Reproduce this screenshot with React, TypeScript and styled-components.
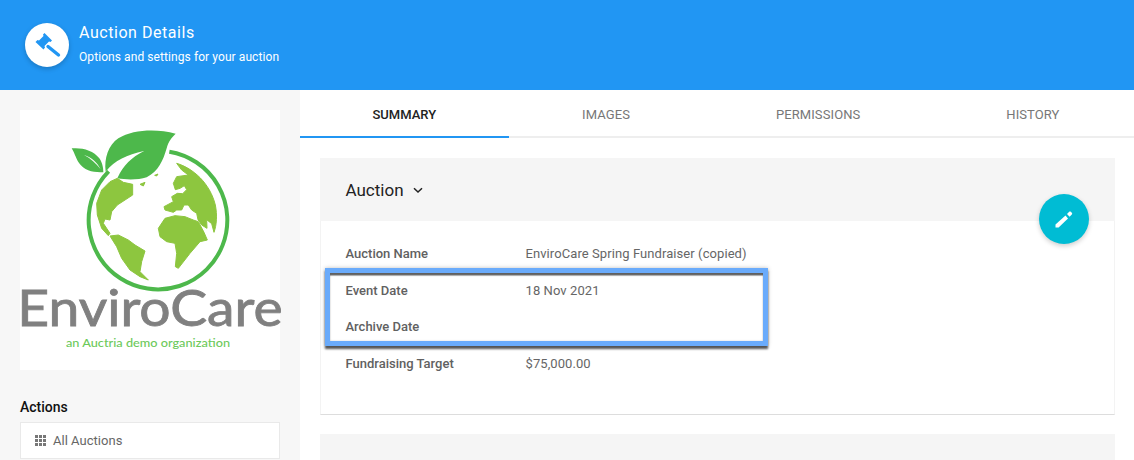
import React from "react";
import styled, { createGlobalStyle } from "styled-components";

const Global = createGlobalStyle`
  html, body { margin: 0; padding: 0; background: #fff; overflow: hidden; }
  body { font-family: Roboto, "Liberation Sans", sans-serif; }
  * { box-sizing: border-box; }
`;
const Page = styled.div`width: 1134px; height: 460px; overflow: hidden; display: flex; flex-direction: column;`;
const Header = styled.header`
  height: 90px; flex: none; background: #2196f3; display: flex; align-items: flex-start; gap: 10px;
  padding: 23px 0 0 25px; color: #fff;
`;
const Badge = styled.div`
  width: 44px; height: 44px; border-radius: 50%; background: #fff; display: flex; align-items: center;
  justify-content: center; box-shadow: 0 2px 5px rgba(0,0,0,.2);
`;
const HeaderText = styled.div`display: flex; flex-direction: column;`;
const Title = styled.div`font-size: 16px; line-height: 19px; margin-bottom: 8px; letter-spacing: .55px;`;
const Subtitle = styled.div`font-size: 12px; line-height: 14px; letter-spacing: .08px;`;
const Body = styled.div`flex: 1; display: flex; min-height: 0;`;
const Sidebar = styled.aside`width: 300px; flex: none; background: #f7f7f7; padding: 20px;`;
const LogoCard = styled.div`width: 260px; height: 260px; background: #fff; display: block;`;
const LogoArt = styled.svg`display: block; overflow: visible;`;
const ActionsTitle = styled.div`font-size: 14px; line-height: 16px; font-weight: 500; color: #111; margin-top: 29px; margin-bottom: 7px;`;
const ActionItem = styled.div`
  height: 37px; background: #fff; border: 1px solid #e9e9e9; display: flex; align-items: center; gap: 7px;
  padding-left: 14px; font-size: 13px; color: #666; letter-spacing: .02px;
`;
const Main = styled.main`flex: 1; min-width: 0; display: flex; flex-direction: column;`;
const Tabs = styled.nav`height: 48px; flex: none; display: flex; border-bottom: 2px solid #eee; padding-right: 1.5px; margin-left: -.5px;`;
const Tab = styled.div<{ $active?: boolean }>`
  flex: 1 1 auto; height: 48px; display: flex; align-items: center; justify-content: center; font-size: 13px;
  padding-top: 2px; letter-spacing: ${p => (p.$active ? "0" : ".1px")};
  font-weight: ${p => (p.$active ? 500 : 400)};
  color: ${p => (p.$active ? "#222" : "#777")}; border-bottom: 2px solid ${p => (p.$active ? "#2196f3" : "transparent")};
`;
const Content = styled.div`padding: 20px 19.5px; display: flex; flex-direction: column; gap: 19px;`;
const Card = styled.section`position: relative; background: #fff; border-right: 1px solid #f3f3f3; border-left: 1px solid #f3f3f3; border-bottom: 1px solid #ddd; height: 257px;`;
const CardHead = styled.div`
  height: 63px; margin: 0 -1px; background: #f5f5f5; display: flex; align-items: center; gap: 9px; padding: 1px 0 0 26px;
  font-size: 17px; color: #222;
`;
const NextCard = styled.div`height: 60px; background: #f5f5f5;`;
const Rows = styled.div`display: flex; flex-direction: column; padding: 14.4px 0 0 25px;`;
const Row = styled.div`height: 36.5px; display: flex; align-items: center; font-size: 13px; color: #666; letter-spacing: .08px;`;
const Label = styled.div`width: 180px; font-weight: 500; color: #616161; letter-spacing: 0;`;
const Fab = styled.div`
  position: absolute; right: 24.5px; top: 36px; width: 50px; height: 50px; border-radius: 50%; background: #00bcd4;
  display: flex; align-items: center; justify-content: center; box-shadow: 0 2px 5px rgba(0,0,0,.2);
`;
const Highlight = styled.div`
  position: absolute; left: 4.5px; top: 110px; width: 443px; height: 78px; border: 5px solid #6aabfb; pointer-events: none;
  box-shadow: inset 0 3px 1px -.5px rgba(70,70,70,.85), inset 0 0 2px rgba(0,0,0,.2), 0 3px 2px rgba(60,60,60,.85), 0 0 4px rgba(0,0,0,.25);
`;

const Gavel = () => (
  <svg width="44" height="44" viewBox="0 0 44 44" aria-hidden="true">
    <path fill="#2196f3" d="M19.5 10 27 17.5 25.5 19 24 18.5 19.5 23 20 24.5 18.5 26.5 10.5 19 12.5 17 14 17.5 18.5 13 18 11.5Z" />
    <path d="M23 23.5 33.5 32" stroke="#2196f3" strokeWidth="3.4" strokeLinecap="round" fill="none" />
  </svg>
);
const Pencil = () => (
  <svg width="20" height="20" viewBox="0 0 20 20" aria-hidden="true" fill="#fff">
    <path d="M1.5 15.5 11.5 6.5 14 9.5 4.6 18.5 1.5 18.5Z" />
    <path d="M13 5 15.2 2.8c.5-.5 1.1-.5 1.6 0l1 1c.5.5.5 1.2 0 1.7L15.6 7.8Z" />
  </svg>
);
const Apps = () => (
  <svg width="11" height="11" viewBox="0 0 11 11" fill="#777" aria-hidden="true">
    {[0, 4, 8].flatMap(y => [0, 4, 8].map(x => <rect key={`${x}-${y}`} x={x} y={y} width="3" height="3" />))}
  </svg>
);
const Chevron = () => (
  <svg width="10" height="7" viewBox="0 0 10 7" fill="none" stroke="#222" strokeWidth="1.5" aria-hidden="true">
    <path d="M1 1.2 5 5 9 1.2" />
  </svg>
);
const Logo = () => (
  <LogoCard>
    <LogoArt width="260" height="260" viewBox="30 30 780 780">
      <path d="M478 155A208 208 0 1 1 296 214" fill="none" stroke="#4db84b" strokeWidth="12" />
      <path fill="#4db84b" d="M497 101C440 86 370 88 325 115 295 135 282 175 287 215 315 180 350 165 402 153 365 172 340 195 322 235 350 240 385 240 410 232 445 215 460 180 470 145 475 125 485 112 497 101Z" />
      <path fill="#4db84b" d="M185 145C215 142 250 150 268 175 278 190 280 205 280 217 255 217 230 215 212 195 198 180 195 160 185 145Z" />
      <path fill="#fff" d="M222 165C245 172 262 188 272 208 258 190 242 175 222 165Z" />
      <g transform="translate(150 75)" fill="#8dc63f" stroke="#8dc63f" strokeWidth="3" strokeLinejoin="round">
        <path d="M150 170 172 160 190 172 218 178 218 210 195 225 172 240 155 260 150 285 135 282 130 295 140 310 150 325 145 332 125 310 112 270 110 235 125 195Z" />
        <path d="M150 333 175 330 205 345 225 360 255 378 245 410 240 440 265 465 240 455 210 435 185 400 170 365Z" />
        <path d="M240 178 255 172 250 183Z" />
        <path d="M284 151 294 147 290 153Z" />
        <path d="M350 115C400 130 450 175 466 240 472 270 470 300 462 322L455 296 440 284 441 310 425 300 414 284 410 265 395 255 385 240 372 240 365 255 350 255 340 262 315 255 312 245 340 230 335 215 352 205 368 206 380 194 373 182 360 190 346 194 340 175 350 155 385 150 365 135Z" />
        <path d="M295 310 315 280 345 272 375 275 400 285 415 290 432 322 442 345 420 350 390 385 355 430 346 425 350 385 345 355 320 350 300 335Z" />
      </g>
      <text x="22" y="678" fontFamily="Lato, sans-serif" fontSize="148" stroke="#808080" strokeWidth="2.5" fill="#808080" textLength="796" lengthAdjust="spacingAndGlyphs">EnviroCare</text>
      <text x="168" y="742" fontFamily="Lato, sans-serif" fontWeight="500" fontSize="36" fill="#6cc95a" textLength="492" lengthAdjust="spacingAndGlyphs">an Auctria demo organization</text>
    </LogoArt>
  </LogoCard>
);

export default function App() {
  return (
    <Page>
      <Global />
      <Header>
        <Badge><Gavel /></Badge>
        <HeaderText>
          <Title>Auction Details</Title>
          <Subtitle>Options and settings for your auction</Subtitle>
        </HeaderText>
      </Header>
      <Body>
        <Sidebar>
          <Logo />
          <ActionsTitle>Actions</ActionsTitle>
          <ActionItem><Apps />All Auctions</ActionItem>
        </Sidebar>
        <Main>
          <Tabs>
            <Tab $active>SUMMARY</Tab>
            <Tab>IMAGES</Tab>
            <Tab>PERMISSIONS</Tab>
            <Tab>HISTORY</Tab>
          </Tabs>
          <Content>
            <Card>
              <CardHead>Auction <Chevron /></CardHead>
              <Fab><Pencil /></Fab>
              <Rows>
                <Row><Label>Auction Name</Label>EnviroCare Spring Fundraiser (copied)</Row>
                <Row><Label>Event Date</Label>18 Nov 2021</Row>
                <Row><Label>Archive Date</Label></Row>
                <Row><Label>Fundraising Target</Label>$75,000.00</Row>
              </Rows>
              <Highlight />
            </Card>
            <NextCard />
          </Content>
        </Main>
      </Body>
    </Page>
  );
}
